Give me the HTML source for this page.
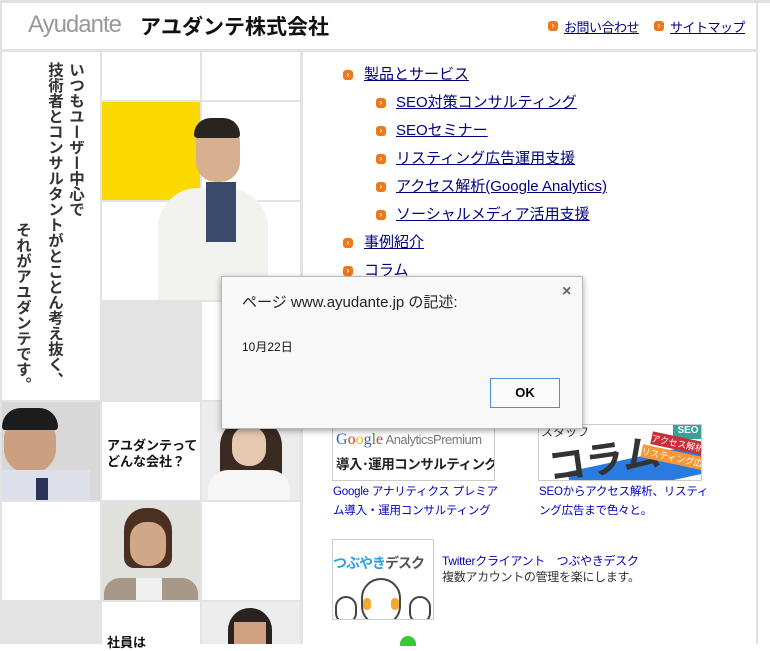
<!DOCTYPE html>
<html><head><meta charset="utf-8"><style>
*{margin:0;padding:0;box-sizing:border-box}
body{width:770px;height:644px;overflow:hidden;background:#fff;font-family:"Liberation Sans","Noto Sans CJK JP",sans-serif;position:relative}
.a{position:absolute}
.c{position:absolute;background:#fff}
.b{position:absolute;width:10px;height:10px;border-radius:3px;background:#f07818;color:#fff;font-size:8px;line-height:10px;text-align:center;font-weight:bold}
.m{position:absolute;color:#000080;text-decoration:underline;font-size:15px;white-space:nowrap;line-height:18px}
.cap{position:absolute;color:#0000c0;font-size:11.5px;line-height:19px;letter-spacing:-0.2px}
</style></head><body>
<div class="a" style="left:0;top:0;width:770px;height:3px;background:#e0e0e0"></div>
<div class="a" style="left:0;top:0;width:2px;height:644px;background:#e0e0e0"></div>
<div class="a" style="left:756px;top:0;width:2px;height:644px;background:#e0e0e0"></div>
<div class="a" style="left:0;top:49px;width:758px;height:3px;background:#e3e3e3"></div>
<div class="a" style="left:28px;top:11px;font-size:24px;color:#999;letter-spacing:-1px">Ayudante</div>
<div class="a" style="left:140px;top:11px;font-size:21px;font-weight:bold;color:#111">アユダンテ株式会社</div>
<div class="b" style="left:548px;top:21px">›</div>
<div class="a" style="left:564px;top:17px;font-size:13px;color:#000080;text-decoration:underline;letter-spacing:-0.5px">お問い合わせ</div>
<div class="b" style="left:654px;top:21px">›</div>
<div class="a" style="left:670px;top:17px;font-size:13px;color:#000080;text-decoration:underline;letter-spacing:-0.5px">サイトマップ</div>

<div class="a" style="left:0;top:52px;width:303px;height:592px;background:#e3e3e3"></div>
<div class="c" style="left:2px;top:52px;width:98px;height:348px"></div>
<div class="a" style="left:44px;top:62px;writing-mode:vertical-rl;font-size:15.5px;font-weight:bold;color:#333;line-height:21px;height:340px">いつもユーザー中心で<br>技術者とコンサルタントがとことん考え抜く、</div>
<div class="a" style="left:12px;top:222px;writing-mode:vertical-rl;font-size:15.5px;font-weight:bold;color:#333;line-height:21px">それがアユダンテです。</div>
<div class="c" style="left:102px;top:52px;width:98px;height:48px"></div>
<div class="c" style="left:202px;top:52px;width:98px;height:48px"></div>
<div class="a" style="left:102px;top:102px;width:98px;height:98px;background:#fbd800"></div>
<div class="c" style="left:202px;top:102px;width:98px;height:98px"></div>
<div class="c" style="left:102px;top:202px;width:98px;height:98px"></div>
<div class="c" style="left:202px;top:202px;width:98px;height:98px"></div>
<div class="a" style="left:102px;top:302px;width:98px;height:98px;background:#e3e3e3"></div>
<div class="c" style="left:202px;top:302px;width:98px;height:98px"></div>
<!-- man -->
<div class="a" style="left:158px;top:188px;width:110px;height:112px;background:#f2f2ee;border-radius:40px 40px 0 0"></div>
<div class="a" style="left:206px;top:182px;width:30px;height:60px;background:#3a4a6a"></div>
<div class="a" style="left:196px;top:122px;width:44px;height:60px;background:#d8b090;border-radius:20px"></div>
<div class="a" style="left:194px;top:118px;width:46px;height:20px;background:#2a2420;border-radius:20px 20px 4px 4px"></div>
<!-- row 2 -->
<div class="a" style="left:2px;top:402px;width:98px;height:98px;background:#d8d8d8"></div>
<div class="a" style="left:4px;top:415px;width:52px;height:58px;background:#caa080;border-radius:24px"></div>
<div class="a" style="left:2px;top:408px;width:56px;height:22px;background:#1c1c1c;border-radius:24px 24px 4px 4px"></div>
<div class="a" style="left:2px;top:470px;width:88px;height:30px;background:#dde0ea"></div>
<div class="a" style="left:36px;top:478px;width:12px;height:22px;background:#2a3358"></div>
<div class="c" style="left:102px;top:402px;width:98px;height:98px"></div>
<div class="a" style="left:107px;top:438px;font-size:13px;font-weight:bold;line-height:16px;color:#111">アユダンテって<br>どんな会社？</div>
<div class="a" style="left:202px;top:402px;width:98px;height:98px;background:#ececec"></div>
<div class="a" style="left:220px;top:418px;width:62px;height:82px;background:#3a2a22;border-radius:28px 28px 0 0"></div>
<div class="a" style="left:232px;top:426px;width:34px;height:40px;background:#e6c8b0;border-radius:16px"></div>
<div class="a" style="left:208px;top:470px;width:82px;height:30px;background:#f6f6f6;border-radius:20px 20px 0 0"></div>
<!-- row 3 -->
<div class="c" style="left:2px;top:502px;width:98px;height:98px"></div>
<div class="a" style="left:102px;top:502px;width:98px;height:98px;background:#e0e0dc"></div>
<div class="a" style="left:124px;top:508px;width:48px;height:60px;background:#4a3020;border-radius:22px 22px 10px 10px"></div>
<div class="a" style="left:130px;top:522px;width:36px;height:44px;background:#d0a888;border-radius:16px"></div>
<div class="a" style="left:104px;top:578px;width:94px;height:22px;background:#a89888;border-radius:16px 16px 0 0"></div>
<div class="a" style="left:136px;top:578px;width:26px;height:22px;background:#f0f0f0"></div>
<div class="c" style="left:202px;top:502px;width:98px;height:98px"></div>
<!-- row 4 -->
<div class="a" style="left:102px;top:602px;width:98px;height:42px;background:#fff"></div>
<div class="a" style="left:107px;top:632px;font-size:13px;font-weight:bold;color:#111">社員は</div>
<div class="a" style="left:202px;top:602px;width:98px;height:42px;background:#ececec"></div>
<div class="a" style="left:228px;top:608px;width:44px;height:36px;background:#2a2220;border-radius:22px 22px 0 0"></div>
<div class="a" style="left:234px;top:622px;width:32px;height:22px;background:#d0a080"></div>

<!-- menu -->
<div class="b" style="left:343px;top:70px">›</div><div class="m" style="left:364px;top:66px">製品とサービス</div>
<div class="b" style="left:376px;top:98px">›</div><div class="m" style="left:396px;top:94px">SEO対策コンサルティング</div>
<div class="b" style="left:376px;top:126px">›</div><div class="m" style="left:396px;top:122px">SEOセミナー</div>
<div class="b" style="left:376px;top:154px">›</div><div class="m" style="left:396px;top:150px">リスティング広告運用支援</div>
<div class="b" style="left:376px;top:182px">›</div><div class="m" style="left:396px;top:178px">アクセス解析(Google Analytics)</div>
<div class="b" style="left:376px;top:210px">›</div><div class="m" style="left:396px;top:206px">ソーシャルメディア活用支援</div>
<div class="b" style="left:343px;top:238px">›</div><div class="m" style="left:364px;top:234px">事例紹介</div>
<div class="b" style="left:343px;top:266px">›</div><div class="m" style="left:364px;top:262px">コラム</div>

<!-- banners -->
<div class="a" style="left:332px;top:424px;width:163px;height:57px;border:1px solid #ccc;background:#fff;overflow:hidden">
<div class="a" style="left:3px;top:6px;font-size:16px;font-family:'Liberation Serif',serif;white-space:nowrap"><span style="color:#3366cc">G</span><span style="color:#d33">o</span><span style="color:#eb0">o</span><span style="color:#3366cc">g</span><span style="color:#393">l</span><span style="color:#d33">e</span><span style="font-family:'Liberation Sans',sans-serif;font-size:13px;color:#777;letter-spacing:-0.5px"> AnalyticsPremium</span></div>
<div class="a" style="left:3px;top:28px;font-size:13.5px;font-weight:bold;color:#222;white-space:nowrap;letter-spacing:-0.5px">導入･運用コンサルティング</div></div>
<div class="cap" style="left:333px;top:483px;width:172px">Google アナリティクス プレミアム導入・運用コンサルティング</div>
<div class="a" style="left:538px;top:424px;width:164px;height:57px;border:1px solid #ccc;background:#fff;overflow:hidden">
<div class="a" style="left:30px;top:32px;width:140px;height:30px;background:#2a7ae0;transform:rotate(-12deg)"></div>
<div class="a" style="left:2px;top:-2px;font-size:12px;color:#333">スタッフ</div>
<div class="a" style="left:8px;top:4px;font-size:38px;font-weight:bold;color:#333;transform:rotate(-8deg)">コラム</div>
<div class="a" style="left:134px;top:0;width:30px;height:14px;background:#3aa09a;color:#fff;font-size:10px;font-weight:bold;text-align:center">SEO</div>
<div class="a" style="left:112px;top:12px;width:56px;height:13px;background:#c8303a;color:#fff;font-size:9px;transform:rotate(12deg);white-space:nowrap">アクセス解析</div>
<div class="a" style="left:102px;top:26px;width:66px;height:13px;background:#f89838;color:#fff;font-size:9px;transform:rotate(12deg);white-space:nowrap">リスティング広告</div></div>
<div class="cap" style="left:539px;top:483px;width:172px">SEOからアクセス解析、リスティング広告まで色々と。</div>
<div class="a" style="left:332px;top:539px;width:102px;height:81px;border:1px solid #ccc;background:#fff;overflow:hidden">
<div class="a" style="left:0;top:13px;font-size:14px;font-weight:bold;white-space:nowrap;letter-spacing:-1px"><span style="color:#29a0e0">つぶやき</span><span style="color:#555">デスク</span></div>
<div class="a" style="left:28px;top:38px;width:40px;height:48px;border:2px solid #444;border-radius:20px;background:#fff"></div>
<div class="a" style="left:30px;top:58px;width:8px;height:12px;background:#f3a830;border-radius:4px"></div>
<div class="a" style="left:58px;top:58px;width:8px;height:12px;background:#f3a830;border-radius:4px"></div>
<div class="a" style="left:2px;top:56px;width:22px;height:28px;border:2px solid #444;border-radius:11px"></div>
<div class="a" style="left:76px;top:56px;width:22px;height:28px;border:2px solid #444;border-radius:11px"></div></div>
<div class="a" style="left:442px;top:553px;font-size:12px;line-height:16px;color:#333;letter-spacing:-0.3px"><span style="color:#0000c0">Twitterクライアント　つぶやきデスク</span><br>複数アカウントの管理を楽にします。</div>
<div class="a" style="left:400px;top:636px;width:16px;height:10px;background:#3c3;border-radius:8px 8px 0 0"></div>

<!-- dialog -->
<div class="a" style="left:221px;top:276px;width:362px;height:153px;background:#f8f8f8;border:1px solid #bbb;box-shadow:0 2px 6px rgba(0,0,0,.35)">
<div class="a" style="left:20px;top:14px;font-size:15px;color:#222;white-space:nowrap">ページ www.ayudante.jp の記述:</div>
<div class="a" style="left:340px;top:6px;font-size:16px;color:#666;font-weight:bold">×</div>
<div class="a" style="left:20px;top:61px;font-size:12px;color:#111">10月22日</div>
<div class="a" style="left:268px;top:101px;width:70px;height:30px;border:1px solid #4a90e2;background:#fbfbfb;font-size:13px;font-weight:bold;text-align:center;line-height:28px">OK</div>
</div>
</body></html>
